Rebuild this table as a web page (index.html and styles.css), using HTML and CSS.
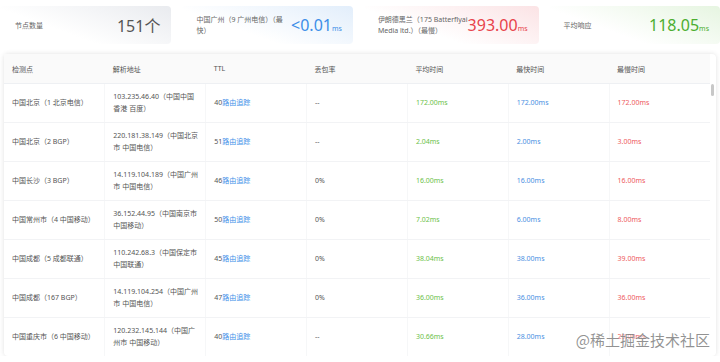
FILE: index.html
```html
<!DOCTYPE html>
<html lang="zh-CN">
<head>
  <meta charset="UTF-8" />
  <meta name="viewport" content="width=device-width, initial-scale=1.0"/>
  <title>Ping 检测</title>
  <link rel="stylesheet" href="styles.css">
</head>
<body>

  <div class="stats">
    <div class="stat stat-gray">
      <div class="stat-label">节点数量</div>
      <div class="stat-value">151<span class="unit-big">个</span></div>
    </div>
    <div class="stat stat-blue">
      <div class="stat-label">中国广州（9 广州电信）（最<br>快）</div>
      <div class="stat-value">&lt;0.01<span class="unit">ms</span></div>
    </div>
    <div class="stat stat-red">
      <div class="stat-label">伊朗德黑兰（175 Batterflyai<br>Media ltd.）（最慢）</div>
      <div class="stat-value">393.00<span class="unit">ms</span></div>
    </div>
    <div class="stat stat-green">
      <div class="stat-label">平均响应</div>
      <div class="stat-value">118.05<span class="unit">ms</span></div>
    </div>
  </div>

  <div class="table-wrap">
    <table class="result">
      <thead>
        <tr>
          <th>检测点</th>
          <th>解析地址</th>
          <th>TTL</th>
          <th>丢包率</th>
          <th>平均时间</th>
          <th>最快时间</th>
          <th>最慢时间</th>
        </tr>
      </thead>
      <tbody>
        <tr>
          <td>中国北京（1 北京电信）</td>
          <td>103.235.46.40（中国中国香港 百度）</td>
          <td>40<a href="#">路由追踪</a></td>
          <td>--</td>
          <td class="avg">172.00ms</td>
          <td class="min">172.00ms</td>
          <td class="max">172.00ms</td>
        </tr>
        <tr>
          <td>中国北京（2 BGP）</td>
          <td>220.181.38.149（中国北京市 中国电信）</td>
          <td>51<a href="#">路由追踪</a></td>
          <td>--</td>
          <td class="avg">2.04ms</td>
          <td class="min">2.00ms</td>
          <td class="max">3.00ms</td>
        </tr>
        <tr>
          <td>中国长沙（3 BGP）</td>
          <td>14.119.104.189（中国广州市 中国电信）</td>
          <td>46<a href="#">路由追踪</a></td>
          <td>0%</td>
          <td class="avg">16.00ms</td>
          <td class="min">16.00ms</td>
          <td class="max">16.00ms</td>
        </tr>
        <tr>
          <td>中国常州市（4 中国移动）</td>
          <td>36.152.44.95（中国南京市 中国移动）</td>
          <td>50<a href="#">路由追踪</a></td>
          <td>0%</td>
          <td class="avg">7.02ms</td>
          <td class="min">6.00ms</td>
          <td class="max">8.00ms</td>
        </tr>
        <tr>
          <td>中国成都（5 成都联通）</td>
          <td>110.242.68.3（中国保定市 中国联通）</td>
          <td>45<a href="#">路由追踪</a></td>
          <td>0%</td>
          <td class="avg">38.04ms</td>
          <td class="min">38.00ms</td>
          <td class="max">39.00ms</td>
        </tr>
        <tr>
          <td>中国成都（167 BGP）</td>
          <td>14.119.104.254（中国广州市 中国电信）</td>
          <td>47<a href="#">路由追踪</a></td>
          <td>0%</td>
          <td class="avg">36.00ms</td>
          <td class="min">36.00ms</td>
          <td class="max">36.00ms</td>
        </tr>
        <tr>
          <td>中国重庆市（6 中国移动）</td>
          <td>120.232.145.144（中国广州市 中国移动）</td>
          <td>40<a href="#">路由追踪</a></td>
          <td>--</td>
          <td class="avg">30.66ms</td>
          <td class="min">28.00ms</td>
          <td class="max">29.00ms</td>
        </tr>
      </tbody>
    </table>
    <div class="scroll-thumb"></div>
    <div class="watermark">@稀土掘金技术社区</div>
  </div>

</body>
</html>
```

FILE: styles.css
```css
body {
  font-family: "Noto Sans", "Noto Sans CJK SC", sans-serif;
  background: #fff;
  margin: 0;
  padding: 6px 0 0;
  color: #555;
}
.stats {
  display: grid;
  grid-template-columns: repeat(4, 1fr);
  gap: 10px;
  height: 38px;
}
.stat {
  display: flex;
  align-items: center;
  justify-content: space-between;
  padding: 0 11px 0 15px;
  border-radius: 4px;
}
.stat-gray { background: linear-gradient(20deg, #fff 35%, #e9ebef); }
.stat-blue { background: linear-gradient(20deg, #fff 35%, #e2eefb); }
.stat-red { background: linear-gradient(20deg, #fff 35%, #fbe3e5); }
.stat-green { background: linear-gradient(20deg, #fff 35%, #e6f5e1); }
.stat-label {
  font-size: 7px;
  line-height: 11px;
  color: #666;
  white-space: nowrap;
}
.stat-value {
  font-size: 16px;
  color: #555;
  white-space: nowrap;
}
.stat-blue .stat-value { color: #3d8ee8; }
.stat-red .stat-value { color: #e8434b; }
.stat-green .stat-value { color: #4cae30; }
.unit {
  font-size: 7px;
}
.unit-big {
  font-size: 16px;
}
.table-wrap {
  position: relative;
  margin: 10px 4px 0;
  padding-right: 6px;
  background: #fff;
  border-radius: 4px;
  box-shadow: 0 0 5px rgba(0,0,0,0.12);
}
.result {
  width: 100%;
  border-collapse: collapse;
  table-layout: fixed;
  font-size: 7px;
}
.result th {
  text-align: left;
  font-weight: normal;
  color: #555;
  height: 29px;
  padding: 0 8px;
  background: #fafafa;
  border-bottom: 1px solid #eef0f3;
}
.result td {
  height: 38px;
  padding: 0 5px 0 8px;
  line-height: 12px;
  color: #555;
  border-bottom: 1px solid #f2f3f5;
  border-left: 1px solid #f6f7f8;
}
.result td:first-child {
  border-left: none;
}
.result tbody tr:last-child td {
  border-bottom: none;
}
.result a {
  color: #3d8ee8;
  text-decoration: none;
}
.result .avg { color: #6cbf4a; }
.result .min { color: #4a90e2; }
.result .max { color: #ee5a60; }
.scroll-thumb {
  position: absolute;
  top: 30px;
  right: 2px;
  width: 3px;
  height: 12px;
  border-radius: 2px;
  background: #c8c8c8;
}
.watermark {
  position: absolute;
  right: 6px;
  bottom: 6px;
  font-family: "Noto Sans CJK SC", sans-serif;
  font-size: 15px;
  color: rgba(110,110,110,0.75);
  text-shadow: 0 0 2px #fff;
}
```
